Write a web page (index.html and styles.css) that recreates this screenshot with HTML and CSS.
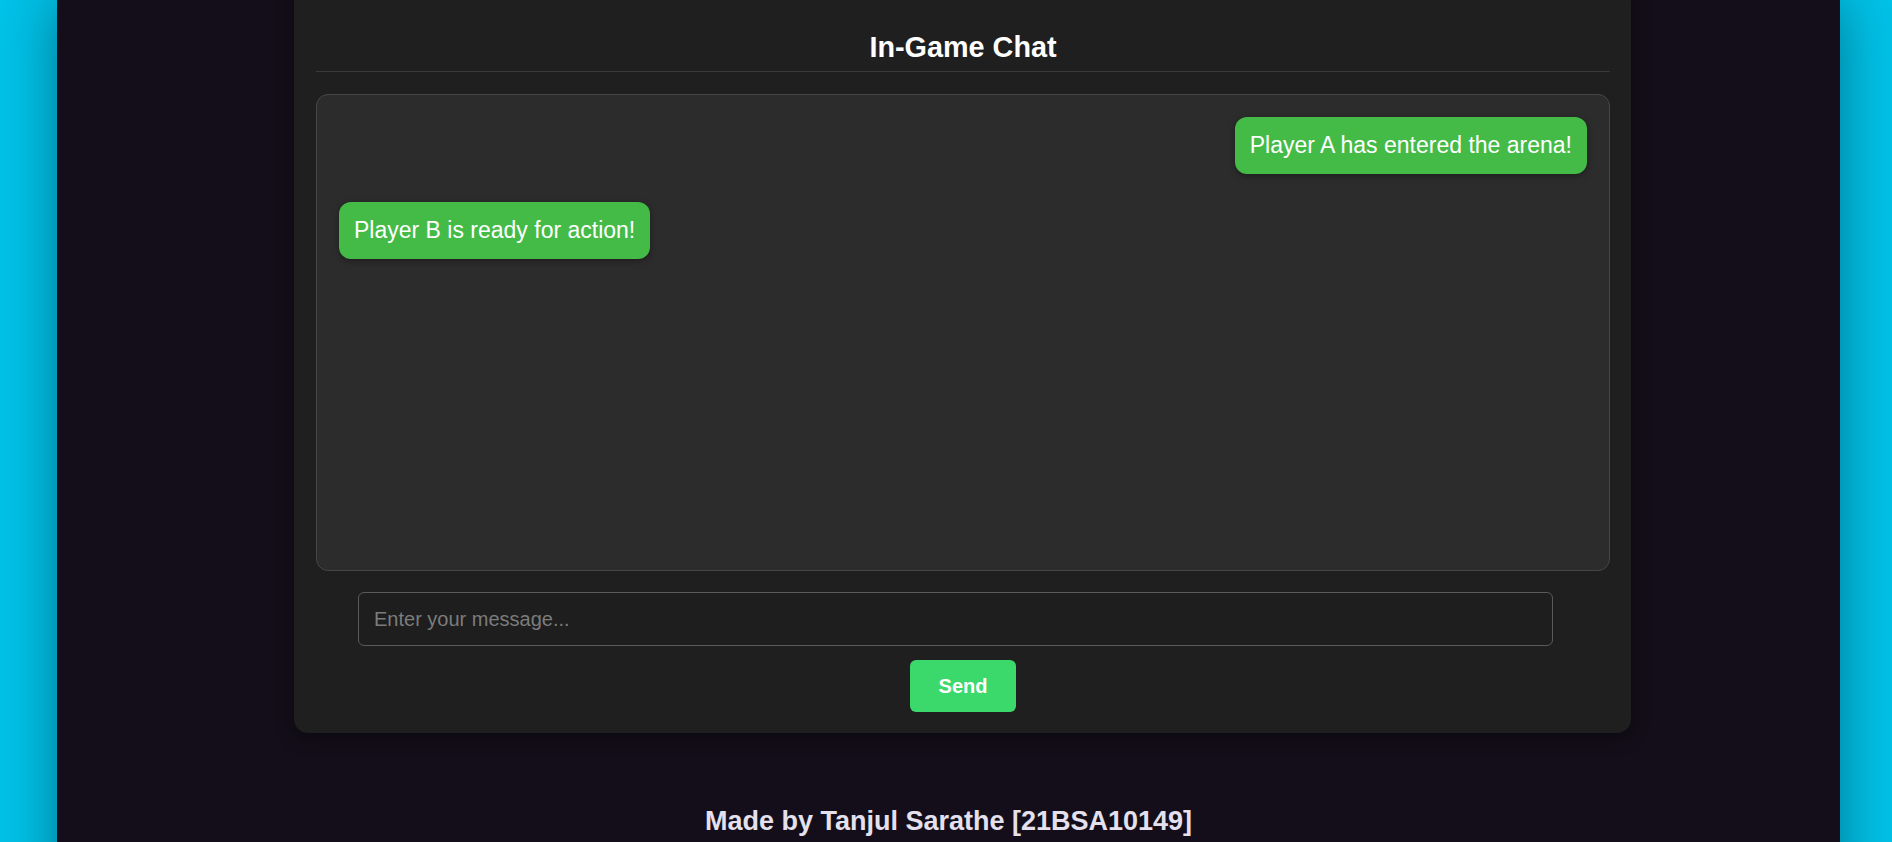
FILE: index.html
```html
<!DOCTYPE html>
<html lang="en">
<head>
<meta charset="utf-8">
<title>In-Game Chat</title>
<link rel="stylesheet" href="styles.css">
</head>
<body>
  <div class="app">
    <section class="card">
      <h2 class="card-title">In-Game Chat</h2>
      <div class="chat-box">
        <div class="bubble bubble-right">Player A has entered the arena!</div>
        <div class="bubble bubble-left">Player B is ready for action!</div>
      </div>
      <div class="input-row">
        <input class="msg-input" type="text" placeholder="Enter your message...">
      </div>
      <button class="send-btn">Send</button>
    </section>
    <footer class="footer">Made by Tanjul Sarathe [21BSA10149]</footer>
  </div>
</body>
</html>
```

FILE: styles.css
```css
html, body {
  margin: 0;
  padding: 0;
}

body {
  background: #00c2e8;
  font-family: "Liberation Sans", Arial, sans-serif;
  display: flex;
  padding-left: 57px;
  overflow: hidden;
  height: 842px;
}

.app {
  width: 1783px;
  min-height: 900px;
  background: #130e19;
  box-shadow: 0 0 55px rgba(0, 0, 0, 0.4);
  display: flex;
  flex-direction: column;
}

.card {
  align-self: flex-start;
  width: 1337px;
  box-sizing: border-box;
  margin-top: -20px;
  margin-left: 237px;
  padding: 51px 21px 21px 22px;
  background: #1f1f1f;
  border-radius: 14px;
  box-shadow: 0 4px 18px rgba(0, 0, 0, 0.35);
  display: flex;
  flex-direction: column;
}

.card-title {
  margin: 0;
  padding-bottom: 7px;
  border-bottom: 1px solid #3a3a3a;
  font-size: 28.8px;
  font-weight: bold;
  color: #ffffff;
  text-align: center;
}

.chat-box {
  margin-top: 22px;
  height: 477px;
  box-sizing: border-box;
  padding: 22px;
  background: #2c2c2c;
  border: 1px solid #464646;
  border-radius: 12px;
  display: flex;
  flex-direction: column;
  gap: 28px;
}

.bubble {
  background: #44bb47;
  color: #ffffff;
  font-size: 23px;
  padding: 15px 15px;
  border-radius: 12px;
  box-shadow: 0 2px 6px rgba(0, 0, 0, 0.35);
}

.bubble-right {
  align-self: flex-end;
}

.bubble-left {
  align-self: flex-start;
}

.input-row {
  margin-top: 21px;
  padding-left: 42px;
  display: flex;
}

.msg-input {
  width: 1195px;
  height: 54px;
  box-sizing: border-box;
  padding: 0 15px;
  background: #1e1e1e;
  border: 1px solid #5a5a5a;
  border-radius: 6px;
  color: #ffffff;
  font-family: "Liberation Sans", Arial, sans-serif;
  font-size: 20px;
  outline: none;
}

.msg-input::placeholder {
  color: #7c7c7c;
}

.send-btn {
  align-self: center;
  margin-top: 14px;
  width: 106px;
  height: 52px;
  background: #3bd96b;
  border: none;
  border-radius: 6px;
  color: #ffffff;
  font-family: "Liberation Sans", Arial, sans-serif;
  font-size: 20px;
  font-weight: bold;
}

.footer {
  margin-top: 73px;
  text-align: center;
  font-size: 27px;
  font-weight: bold;
  color: #e4e0ee;
}
```
